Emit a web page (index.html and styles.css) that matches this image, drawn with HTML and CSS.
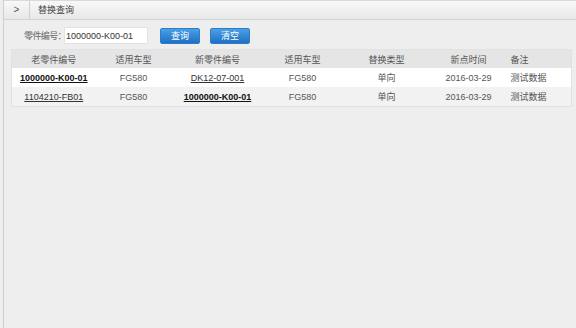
FILE: index.html
```html
<!DOCTYPE html>
<html lang="zh-CN">
<head>
    <meta charset="UTF-8">
    <meta name="viewport" content="width=device-width, initial-scale=1.0">
    <title>替换查询</title>
    <link rel="stylesheet" href="styles.css">
</head>
<body>
    <div class="page">
        <div class="topbar">
            <div class="toggle">&gt;</div>
            <div class="title">替换查询</div>
        </div>

        <div class="search">
            <label for="partNo">零件编号：</label>
            <input type="text" id="partNo" value="1000000-K00-01">
            <button class="btn">查询</button>
            <button class="btn">清空</button>
        </div>

        <table class="result">
            <colgroup>
                <col style="width: 84px">
                <col style="width: 76px">
                <col style="width: 92px">
                <col style="width: 78px">
                <col style="width: 90px">
                <col style="width: 74px">
                <col>
            </colgroup>
            <tr>
                <th>老零件编号</th>
                <th>适用车型</th>
                <th>新零件编号</th>
                <th>适用车型</th>
                <th>替换类型</th>
                <th>新点时间</th>
                <th class="note">备注</th>
            </tr>
            <tr>
                <td><a href="#" class="hit">1000000-K00-01</a></td>
                <td>FG580</td>
                <td><a href="#">DK12-07-001</a></td>
                <td>FG580</td>
                <td>单向</td>
                <td>2016-03-29</td>
                <td class="note">测试数据</td>
            </tr>
            <tr class="alt">
                <td><a href="#">1104210-FB01</a></td>
                <td>FG580</td>
                <td><a href="#" class="hit">1000000-K00-01</a></td>
                <td>FG580</td>
                <td>单向</td>
                <td>2016-03-29</td>
                <td class="note">测试数据</td>
            </tr>
        </table>
    </div>
</body>
</html>
```

FILE: styles.css
```css
body {
    margin: 0;
    background-color: #eeeeee;
    font-family: "Liberation Sans", "Noto Sans CJK SC", sans-serif;
    font-size: 9px;
    color: #555;
}
.page {
    margin-left: 3px;
    height: 328px;
    border-left: 1px solid #cfcfcf;
    box-sizing: border-box;
}
.topbar {
    display: flex;
    height: 20px;
    background: linear-gradient(#f8f8f8, #e8e8e8);
    border-top: 1px solid #dadada;
    border-bottom: 1px solid #d4d4d4;
    box-sizing: border-box;
}
.toggle {
    width: 25px;
    border-right: 1px solid #cfcfcf;
    text-align: center;
    line-height: 18px;
    font-size: 10px;
    color: #555;
}
.title {
    padding-left: 8px;
    line-height: 18px;
    color: #444;
}
.search {
    display: flex;
    align-items: center;
    padding: 7px 0 0 20px;
}
.search label {
    color: #666;
    letter-spacing: -0.6px;
}
.search input {
    width: 84px;
    height: 17px;
    box-sizing: border-box;
    border: 1px solid #e2e2e2;
    padding: 0 1px;
    margin: 0 12px 0 -2px;
    font-family: inherit;
    font-size: 9px;
    color: #333;
}
.btn {
    width: 40px;
    height: 16px;
    margin-right: 10px;
    padding: 0;
    border: 1px solid #2f7cc6;
    border-radius: 2px;
    background: linear-gradient(#4aa0e6, #1f70c2);
    color: #fff;
    font-family: inherit;
    font-size: 9px;
}
.result {
    margin: 5px 4px 0 7px;
    width: 561px;
    border-collapse: collapse;
    table-layout: fixed;
    border: 1px solid #e2e2e2;
}
.result th {
    height: 18px;
    background-color: #e5e5e5;
    font-weight: normal;
    color: #555;
    padding: 0;
}
.result td {
    height: 19px;
    background-color: #fff;
    text-align: center;
    padding: 0;
}
.result .alt td {
    background-color: #f2f2f2;
}
.result .note {
    text-align: left;
    padding-left: 5px;
}
.result a {
    color: #333;
}
.result a.hit {
    color: #111;
    font-weight: bold;
}
```
